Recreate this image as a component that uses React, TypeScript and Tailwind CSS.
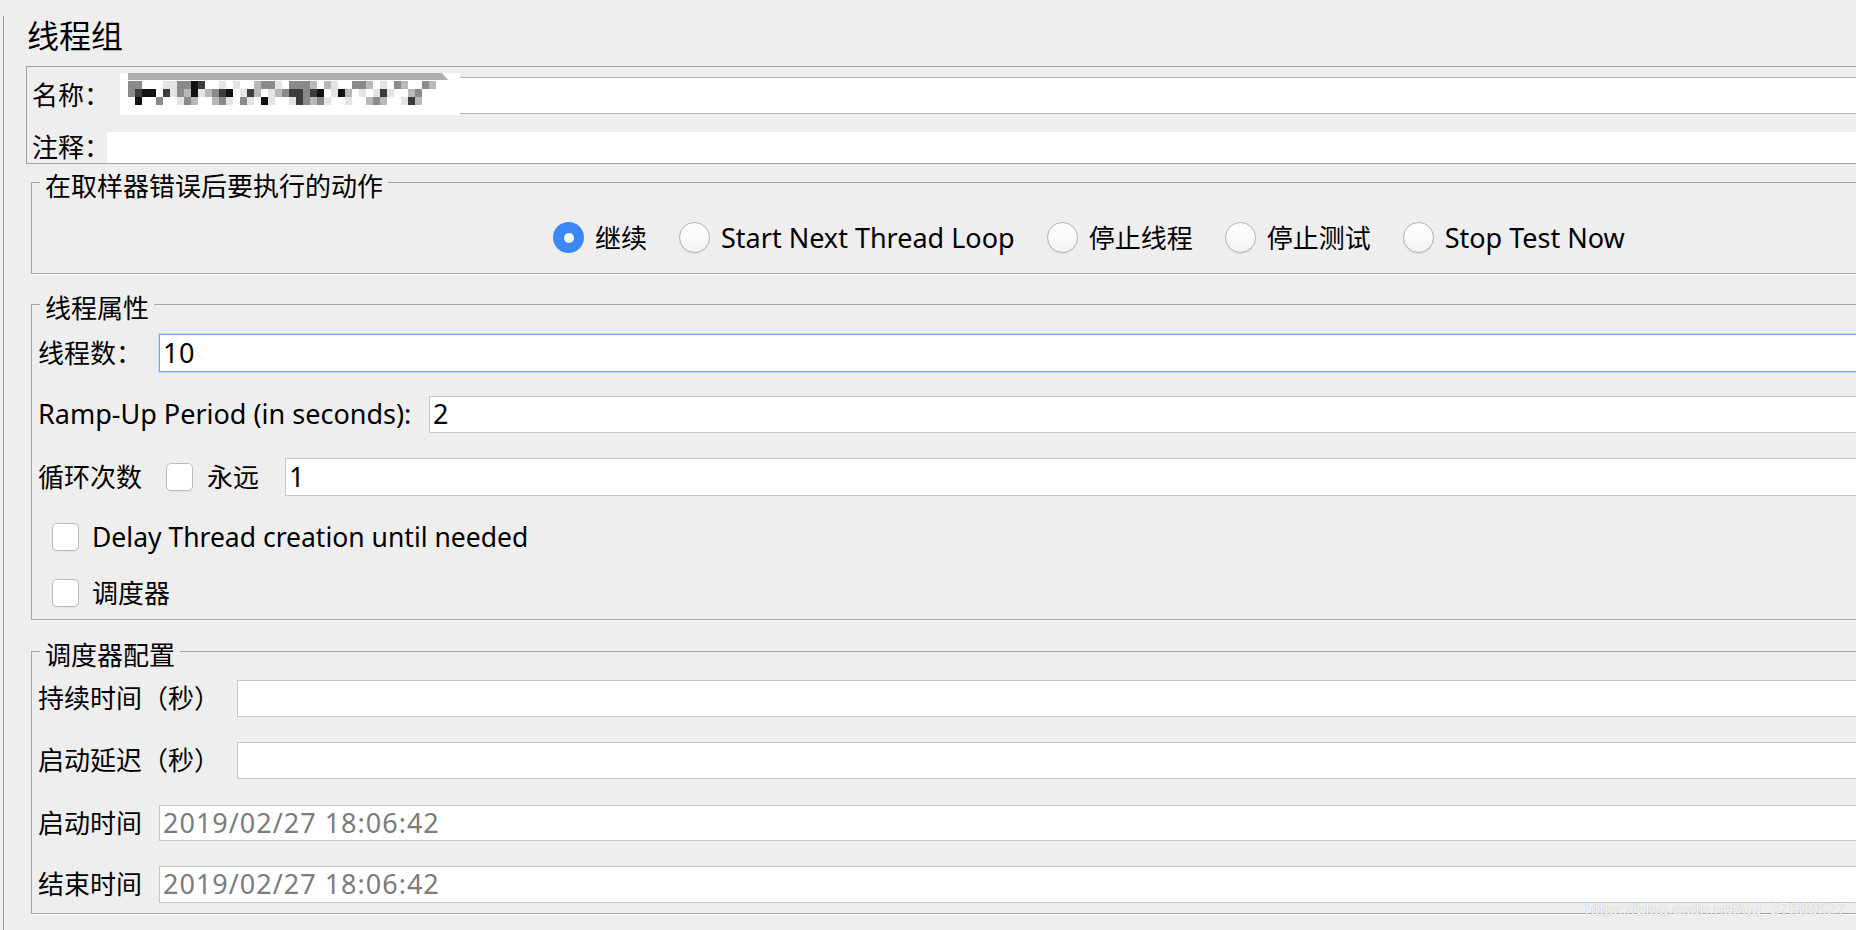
import React from 'react';

const FONT = "font-['Noto_Sans','Noto_Sans_CJK_SC',sans-serif]";

// rough stand-in for the pixelated (censored) name value
const MOSAIC = [
  'oo   ..oo@#  . .  -oo. ooo- -.  oo- . o-  o-  ',
  'o#@@ #.o-@.-o#@ .#- .-o##o#@ .@- . .#.  -o   ',
  ' @  o  .o-  -o. o. @.  .#o-o.  .  -o-  .#-   ',
];
const SHADE: Record<string, string> = {
  '.': '#e4e4e4',
  '-': '#b8b8b8',
  o: '#8a8a8a',
  '#': '#3c3c3c',
  '@': '#111111',
};

const Mosaic: React.FC = () => (
  <svg width="340" height="44" viewBox="0 0 340 44" className="block">
    <rect x="0" y="0" width="340" height="44" fill="#ffffff" />
    <polygon points="8,0 322,0 328,7 8,7" fill="#aeaeae" />
    {MOSAIC.map((row, r) =>
      row.split('').map((c, i) =>
        SHADE[c] ? <rect key={`${r}-${i}`} x={8 + i * 7} y={8 + r * 8} width="7" height="8" fill={SHADE[c]} /> : null
      )
    )}
  </svg>
);

const Radio: React.FC<{ checked?: boolean }> = ({ checked }) =>
  checked ? (
    <span className="flex h-[31px] w-[31px] shrink-0 items-center justify-center rounded-full bg-[#3b87f6]">
      <span className="h-[10px] w-[10px] rounded-full bg-white" />
    </span>
  ) : (
    <span className="h-[31px] w-[31px] shrink-0 rounded-full border border-[#b4b4b4] bg-linear-to-b from-white to-[#f3f3f3] shadow-[0_1px_1px_rgba(0,0,0,0.08)]" />
  );

const Checkbox: React.FC = () => (
  <span className="h-[28px] w-[27px] shrink-0 rounded-[5px] border border-[#bcbcbc] bg-white shadow-[0_1px_1px_rgba(0,0,0,0.05)]" />
);

const Group: React.FC<{ title: string; className?: string; children: React.ReactNode }> = ({ title, className, children }) => (
  <fieldset className={`ml-[5px] border border-[#a4a4a4] shadow-[0_1px_0_#ffffff] ${className ?? ''}`}>
    <legend className="ml-[8px] px-[5px] text-[26px] leading-[30px]">
      <span className="relative top-[4px]">{title}</span>
    </legend>
    {children}
  </fieldset>
);

const Field: React.FC<{ className?: string; value?: string; muted?: boolean; focus?: boolean }> = ({ className, value, muted, focus }) => (
  <div
    className={`flex flex-1 items-center bg-white pl-[3px] text-[27px] ${
      focus ? 'border border-[#78a5e6] shadow-[0_0_0_1px_#c7dcf7]' : 'border border-[#c6c6c6]'
    } ${muted ? 'tracking-[1px] text-[#7c7c7c]' : 'tracking-[0.5px] text-black'} ${className ?? ''}`}
  >
    {value}
  </div>
);

const Row: React.FC<{ label: string; labelW: string; className: string; latin?: boolean; children: React.ReactNode }> = ({
  label,
  labelW,
  className,
  latin,
  children,
}) => (
  <div className={`flex items-stretch pl-[6px] ${className}`}>
    <span className={`flex shrink-0 items-center whitespace-nowrap ${latin ? 'text-[27px]' : 'text-[26px]'} ${labelW}`}>{label}</span>
    {children}
  </div>
);

export default function App() {
  const actions = [
    { t: '继续', latin: false },
    { t: 'Start Next Thread Loop', latin: true },
    { t: '停止线程', latin: false },
    { t: '停止测试', latin: false },
    { t: 'Stop Test Now', latin: true },
  ];

  return (
    <div className={`relative h-[930px] w-[1856px] overflow-hidden bg-[#eeeeee] pl-[3px] text-black ${FONT}`}>
      <div className="h-full border-l border-[#9c9c9c]">
        <div className="w-[1920px] pl-[22px]">
          <h1 className="ml-[1px] mt-[16px] text-[32px] leading-[40px]">线程组</h1>

          {/* name / comment */}
          <div className="mt-[10px] border border-[#a4a4a4]">
            <div className="mt-[10px] flex h-[37px] items-stretch pl-[5px]">
              <span className="flex w-[88px] shrink-0 items-center whitespace-nowrap text-[26px]">名称：</span>
              <div className="flex flex-1 items-stretch border-y border-[#b2b2b2] bg-white">
                <div className="-mt-[5px] h-[42px] overflow-hidden">
                  <Mosaic />
                </div>
              </div>
            </div>
            <div className="mt-[18px] flex h-[31px] items-stretch pl-[5px]">
              <span className="flex w-[75px] shrink-0 items-center whitespace-nowrap text-[26px]">注释：</span>
              <div className="flex-1 bg-white" />
            </div>
          </div>

          <Group title="在取样器错误后要执行的动作" className="mt-[3px] pb-[20px]">
            <div className="ml-[521px] mt-[25px] flex h-[31px] items-center">
              {actions.map((a, i) => (
                <div key={a.t} className={`flex items-center ${i > 0 ? 'ml-[32px]' : ''}`}>
                  <Radio checked={i === 0} />
                  <span className={`ml-[11px] leading-none ${a.latin ? 'text-[27px]' : 'text-[26px]'}`}>{a.t}</span>
                </div>
              ))}
            </div>
          </Group>

          <Group title="线程属性" className="mt-[15px] pb-[12px]">
            <Row label="线程数：" labelW="w-[121px]" className="mt-[15px] h-[38px]">
              <Field value="10" focus />
            </Row>
            <Row label="Ramp-Up Period (in seconds):" labelW="w-[391px]" className="mt-[24px] h-[37px]" latin>
              <Field value="2" />
            </Row>
            <div className="mt-[25px] flex h-[38px] items-stretch pl-[6px]">
              <span className="flex w-[128px] shrink-0 items-center text-[26px]">循环次数</span>
              <div className="flex items-center">
                <Checkbox />
              </div>
              <span className="ml-[14px] flex w-[78px] shrink-0 items-center text-[26px]">永远</span>
              <Field value="1" />
            </div>
            <div className="ml-[20px] mt-[27px] flex h-[28px] items-center">
              <Checkbox />
              <span className="ml-[13px] text-[26.5px] leading-none">Delay Thread creation until needed</span>
            </div>
            <div className="ml-[20px] mt-[28px] flex h-[28px] items-center">
              <Checkbox />
              <span className="ml-[13px] text-[26px] leading-none">调度器</span>
            </div>
          </Group>

          <Group title="调度器配置" className="mt-[16px] pb-[10px]">
            <Row label="持续时间（秒）" labelW="w-[199px]" className="mt-[14px] h-[37px]">
              <Field />
            </Row>
            <Row label="启动延迟（秒）" labelW="w-[199px]" className="mt-[25px] h-[37px]">
              <Field />
            </Row>
            <Row label="启动时间" labelW="w-[121px]" className="mt-[26px] h-[36px]">
              <Field value="2019/02/27 18:06:42" muted />
            </Row>
            <Row label="结束时间" labelW="w-[121px]" className="mt-[25px] h-[37px]">
              <Field value="2019/02/27 18:06:42" muted />
            </Row>
          </Group>
        </div>
      </div>

      <span className="absolute right-[10px] top-[900px] font-['Liberation_Sans',sans-serif] text-[17px] leading-[20px] text-white/90 [text-shadow:0_0_1px_#9a9a9a]">
        https://blog.csdn.net/qq_37889827
      </span>
    </div>
  );
}
